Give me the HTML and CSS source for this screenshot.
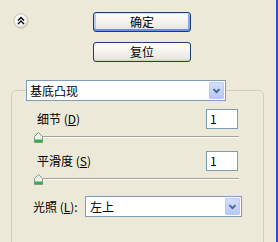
FILE: index.html
```html
<!DOCTYPE html>
<html lang="zh-CN">
<head>
<meta charset="utf-8">
<title>基底凸现</title>
<link rel="stylesheet" href="styles.css">
</head>
<body>
<div class="window">
  <div class="panel">
    <div class="top">
      <button class="collapse" type="button" aria-label="折叠">
        <svg width="16" height="16" viewBox="0 0 16 16">
          <defs>
            <radialGradient id="cg" cx="0.42" cy="0.38" r="0.65">
              <stop offset="0" stop-color="#ffffff"/>
              <stop offset="0.6" stop-color="#f4f3ee"/>
              <stop offset="1" stop-color="#cfccc0"/>
            </radialGradient>
          </defs>
          <circle cx="8" cy="8" r="7.2" fill="url(#cg)" stroke="#bdbab0" stroke-width="0.8"/>
          <path d="M5 7.6 L8 4.6 L11 7.6 M5 11 L8 8 L11 11" fill="none" stroke="#000" stroke-width="1.4"/>
        </svg>
      </button>
      <div class="actions">
        <button class="btn btn-default" type="button">确定</button>
        <button class="btn" type="button">复位</button>
      </div>
    </div>
    <fieldset class="group">
      <legend class="combo combo-filter">
        <span class="combo-text">基底凸现</span>
        <span class="combo-arrow"><svg width="15" height="19" viewBox="0 0 15 19"><path d="M4 8 L7.5 11.5 L11 8" fill="none" stroke="#4d6185" stroke-width="2"/></svg></span>
      </legend>
      <div class="param">
        <label class="label">细节 (<u>D</u>)</label>
        <span class="field">1</span>
      </div>
      <div class="slider">
        <span class="track"></span>
        <svg class="thumb" width="9" height="11" viewBox="0 0 9 11"><path d="M4.5 0.5 L8.5 4.5 L8.5 10.5 L0.5 10.5 L0.5 4.5 Z" fill="#f3f3ee" stroke="#7d9a86"/><rect x="1" y="7.5" width="7" height="2.5" fill="#2fb340"/></svg>
      </div>
      <div class="param">
        <label class="label">平滑度 (<u>S</u>)</label>
        <span class="field">1</span>
      </div>
      <div class="slider">
        <span class="track"></span>
        <svg class="thumb" width="9" height="11" viewBox="0 0 9 11"><path d="M4.5 0.5 L8.5 4.5 L8.5 10.5 L0.5 10.5 L0.5 4.5 Z" fill="#f3f3ee" stroke="#7d9a86"/><rect x="1" y="7.5" width="7" height="2.5" fill="#2fb340"/></svg>
      </div>
      <div class="light">
        <label class="label light-label">光照 (<u>L</u>):</label>
        <div class="combo combo-light">
          <span class="combo-text">左上</span>
          <span class="combo-arrow"><svg width="15" height="19" viewBox="0 0 15 19"><path d="M4 8 L7.5 11.5 L11 8" fill="none" stroke="#4d6185" stroke-width="2"/></svg></span>
        </div>
      </div>
    </fieldset>
  </div>
  <div class="frame-edge"></div>
</div>
</body>
</html>
```

FILE: styles.css
```css
html, body {
  margin: 0;
  padding: 0;
}
body {
  width: 278px;
  height: 242px;
  overflow: hidden;
  background: #ece9d8;
  font-family: "Noto Sans CJK SC", "Noto Sans", sans-serif;
  font-size: 12px;
  color: #000;
}
.window {
  display: flex;
  height: 242px;
}
.panel {
  flex: 1;
  min-width: 0;
}
.frame-edge {
  width: 2px;
  background: #2352d8;
}
.top {
  display: flex;
  align-items: flex-start;
}
.collapse {
  margin: 13px 0 0 13px;
  padding: 0;
  border: 0;
  background: none;
  width: 16px;
  height: 16px;
  display: block;
}
.collapse svg {
  display: block;
}
.actions {
  margin: 12px 0 0 64px;
  display: flex;
  flex-direction: column;
  gap: 10px;
}
.btn {
  width: 98px;
  height: 20px;
  padding: 0;
  font-family: inherit;
  font-size: 12px;
  line-height: 18px;
  color: #000;
  border: 1px solid #1c3f6e;
  border-radius: 3px;
  background: linear-gradient(#ffffff, #f5f4ef 45%, #e9e7df 85%, #d8d4c8);
  box-shadow: inset 0 -1px 0 #d6d0c5;
}
.btn-default {
  box-shadow: inset 0 1px 0 #cfe0fc, inset 0 -2px 0 #6d8ee8, inset 2px 0 0 #b6cbf6, inset -2px 0 0 #8aa5ee;
}
.group {
  margin: 18px 12px 0 11px;
  padding: 8px 0 0 0;
  border: 1px solid #d0d0bf;
  border-radius: 5px;
  min-height: 200px;
  box-sizing: border-box;
}
.combo {
  display: flex;
  align-items: stretch;
  box-sizing: border-box;
  height: 21px;
  border: 1px solid #7f9db9;
  background: #fff;
  padding: 1px;
}
.combo-filter {
  width: 200px;
  margin-left: 14px;
}
.combo-text {
  flex: 1;
  padding-left: 2px;
  line-height: 17px;
}
.combo-arrow {
  width: 15px;
  box-sizing: border-box;
  border: 1px solid #b9cbf3;
  border-radius: 1px;
  background: linear-gradient(#d2def9, #b7c9f4);
  display: flex;
  align-items: center;
  justify-content: center;
}
.combo-arrow svg {
  display: block;
  width: 13px;
  height: 17px;
}
.param {
  display: flex;
  align-items: center;
  justify-content: space-between;
  margin-left: 25px;
  width: 201px;
  height: 20px;
}
.param + .slider + .param {
  margin-top: 8px;
}
.label {
  line-height: 14px;
}
.field {
  box-sizing: border-box;
  width: 32px;
  height: 20px;
  border: 1px solid #7f9db9;
  background: #fff;
  padding-left: 3px;
  line-height: 18px;
}
.slider {
  position: relative;
  margin-left: 23px;
  width: 204px;
  height: 7px;
  padding-top: 7px;
}
.track {
  display: block;
  margin-left: 2px;
  height: 1px;
  background: #a8a595;
  border-bottom: 1px solid #fff;
}
.thumb {
  position: absolute;
  left: -1px;
  top: 3px;
  display: block;
}
.light {
  display: flex;
  align-items: center;
  margin: 11px 0 0 21px;
}
.light-label {
  width: 52px;
}
.combo-light {
  width: 157px;
}
.combo-light .combo-text {
  padding-left: 3px;
}
```
